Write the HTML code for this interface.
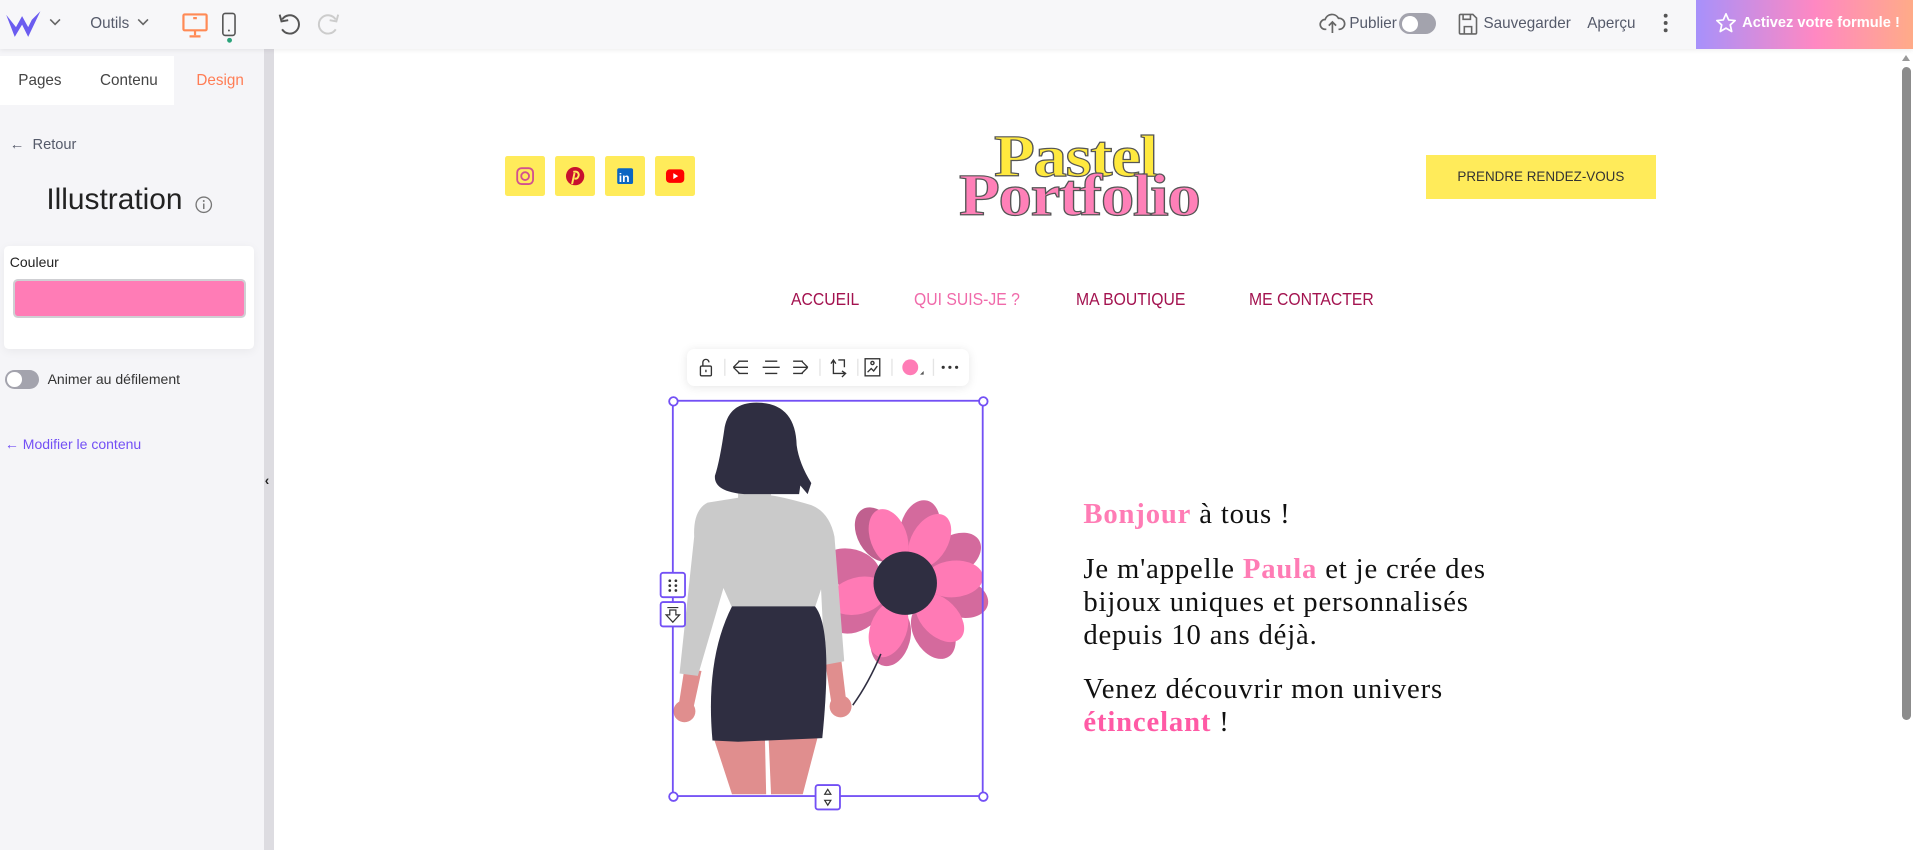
<!DOCTYPE html>
<html><head><meta charset="utf-8">
<style>
html,body{margin:0;padding:0;}
body{width:1568px;height:697px;zoom:1.22;overflow:hidden;position:relative;background:#fff;font-family:"Liberation Sans",sans-serif;}
.abs{position:absolute;}
.top{left:0;top:0;width:1568px;height:40px;background:#f7f7f9;box-shadow:0 1px 4px rgba(0,0,0,.08);z-index:5;}
.t{color:#555a6a;font-size:12.5px;}
.side{left:0;top:40px;width:216px;height:657px;background:#f5f5f8;}
.strip{left:216px;top:40px;width:9px;height:657px;background:#dddce1;}
.nav{font-size:14.5px;color:#a3124f;top:237px;transform:scaleX(.89);transform-origin:left;}
.soc{top:128px;width:33px;height:33px;background:#ffeb5a;border-radius:2px;}
.serif{font-family:"Liberation Serif",serif;font-size:23.5px;color:#111;line-height:27px;letter-spacing:.7px;}
.pk{color:#ff7cb5;font-weight:bold;}
</style></head><body>

<!-- top bar -->
<div class="abs top">
  <svg class="abs" style="left:4px;top:8px" width="30" height="24" viewBox="0 0 30 24"><path d="M1 4 L8 22 L14 12 L19 22 L29 1 L22 8 L19 14 L14 5 L9 14 Z" fill="#6b5cf0"/></svg>
  <svg class="abs" style="left:40px;top:14px" width="10" height="8"><path d="M1 2 L5 6 L9 2" stroke="#666" fill="none" stroke-width="1.3"/></svg>
  <div class="abs t" style="left:74px;top:12px">Outils</div>
  <svg class="abs" style="left:112px;top:14px" width="10" height="8"><path d="M1 2 L5 6 L9 2" stroke="#666" fill="none" stroke-width="1.3"/></svg>
  <svg class="abs" style="left:148px;top:10px" width="24" height="22"><rect x="2" y="2" width="19" height="13" rx="1" fill="none" stroke="#ff8a55" stroke-width="1.8"/><path d="M11.5 15v4M7 20h9M10 5h3" stroke="#ff8a55" stroke-width="1.8"/></svg>
  <svg class="abs" style="left:181px;top:9px" width="14" height="26"><rect x="1.5" y="2" width="10" height="18" rx="2" fill="none" stroke="#555" stroke-width="1.3"/><circle cx="6.5" cy="16" r=".8" fill="#555"/><circle cx="7" cy="24" r="2" fill="#2aa37a"/></svg>
  <svg class="abs" style="left:226px;top:9px" width="22" height="22"><path d="M5 7 A7.5 7.5 0 1 1 5 15" fill="none" stroke="#555" stroke-width="1.6"/><path d="M3 3 L4.5 8.5 L10 7.5" fill="none" stroke="#555" stroke-width="1.6"/></svg>
  <svg class="abs" style="left:258px;top:9px" width="22" height="22"><path d="M17 7 A7.5 7.5 0 1 0 17 15" fill="none" stroke="#ccc" stroke-width="1.6"/><path d="M19 3 L17.5 8.5 L12 7.5" fill="none" stroke="#ccc" stroke-width="1.6"/></svg>

  <svg class="abs" style="left:1081px;top:9px" width="22" height="20"><path d="M6 15 H5 A4 4 0 0 1 5 7 A6 6 0 0 1 16 6 A4.5 4.5 0 0 1 17 15 H16" fill="none" stroke="#666" stroke-width="1.4"/><path d="M11 18 V9 M8 12 L11 9 L14 12" fill="none" stroke="#666" stroke-width="1.4"/></svg>
  <div class="abs t" style="left:1106px;top:12px">Publier</div>
  <div class="abs" style="left:1147px;top:11px;width:30px;height:17px;border-radius:9px;background:#a3a3ad"><div style="position:absolute;left:2px;top:2px;width:13px;height:13px;border-radius:50%;background:#fff"></div></div>
  <svg class="abs" style="left:1194px;top:10px" width="18" height="20"><path d="M3 2 H13 L16 5 V17 A1 1 0 0 1 15 18 H3 A1 1 0 0 1 2 17 V3 A1 1 0 0 1 3 2 Z" fill="none" stroke="#666" stroke-width="1.3"/><path d="M5 2 V6 H11 V2 M6 18 V12 H12 V18" fill="none" stroke="#666" stroke-width="1.3"/></svg>
  <div class="abs t" style="left:1216px;top:12px">Sauvegarder</div>
  <div class="abs t" style="left:1301px;top:12px">Aperçu</div>
  <svg class="abs" style="left:1362px;top:10px" width="6" height="20"><circle cx="3" cy="3" r="1.6" fill="#555"/><circle cx="3" cy="9" r="1.6" fill="#555"/><circle cx="3" cy="15" r="1.6" fill="#555"/></svg>
  <div class="abs" style="left:1390px;top:0;width:178px;height:40px;background:linear-gradient(90deg,#a791fb,#ff88c2 55%,#ffab88)">
    <svg class="abs" style="left:16px;top:10px" width="18" height="18"><path d="M9 1.5 L11.2 6.5 L16.5 7 L12.5 10.6 L13.7 16 L9 13.2 L4.3 16 L5.5 10.6 L1.5 7 L6.8 6.5 Z" fill="none" stroke="#fff" stroke-width="1.4" stroke-linejoin="round"/></svg>
    <div class="abs" style="left:38px;top:12px;color:#fff;font-size:12px;font-weight:bold">Activez votre formule !</div>
  </div>
</div>

<!-- sidebar -->
<div class="abs side">
  <div class="abs" style="left:0;top:6px;width:143px;height:40px;background:#fff"></div>
  <div class="abs t" style="left:15px;top:19px;color:#444">Pages</div>
  <div class="abs t" style="left:82px;top:19px;color:#444">Contenu</div>
  <div class="abs t" style="left:161px;top:19px;color:#ff7d55">Design</div>
  <div class="abs t" style="left:8px;top:72px;font-size:12px">←&nbsp; Retour</div>
  <div class="abs" style="left:38px;top:110px;font-size:24.5px;color:#222">Illustration</div>
  <svg class="abs" style="left:159px;top:120px" width="16" height="16"><circle cx="8" cy="8" r="6.3" fill="none" stroke="#777" stroke-width="1.1"/><path d="M8 7v4.5" stroke="#777" stroke-width="1.2"/><circle cx="8" cy="4.9" r=".8" fill="#777"/></svg>
  <div class="abs" style="left:3px;top:162px;width:205px;height:84px;background:#fff;border-radius:4px;box-shadow:0 2px 8px rgba(0,0,0,.05)">
    <div class="abs" style="left:5px;top:6px;font-size:11.5px;color:#222">Couleur</div>
    <div class="abs" style="left:8px;top:27px;width:187px;height:28px;background:#ff7cb6;border:2px solid #cfcfd3;border-radius:4px"></div>
  </div>
  <div class="abs" style="left:4px;top:263px;width:28px;height:16px;border-radius:8px;background:#a3a3ad"><div style="position:absolute;left:2px;top:2px;width:12px;height:12px;border-radius:50%;background:#fff"></div></div>
  <div class="abs" style="left:39px;top:264px;font-size:11.5px;color:#333">Animer au défilement</div>
  <div class="abs" style="left:4px;top:317px;font-size:11.5px;color:#7350f5">← Modifier le contenu</div>
</div>
<div class="abs strip"><div class="abs" style="left:1px;top:348px;font-size:11px;font-weight:bold;color:#222">‹</div></div>

<!-- scrollbar -->
<div class="abs" style="left:1556px;top:40px;width:12px;height:657px;background:#fff"></div>
<div class="abs" style="left:1559px;top:55px;width:7px;height:535px;background:#8c8c8c;border-radius:4px"></div>
<div class="abs" style="left:1559px;top:45px;width:0;height:0;border-left:3.5px solid transparent;border-right:3.5px solid transparent;border-bottom:5px solid #999"></div>

<!-- header -->
<div class="abs soc" style="left:414px"><svg width="33" height="33"><rect x="10" y="10" width="13" height="13" rx="3.5" fill="none" stroke="#d2508f" stroke-width="1.5"/><circle cx="16.5" cy="16.5" r="3.2" fill="none" stroke="#d2508f" stroke-width="1.5"/></svg></div>
<div class="abs soc" style="left:455px"><svg width="33" height="33"><circle cx="16.5" cy="16.5" r="7.5" fill="#c8102e"/><path d="M15 13 Q19 12 19.5 15.5 Q19 19 16 18.5 M16 14 L14 23" stroke="#ffeb5a" stroke-width="1.6" fill="none"/></svg></div>
<div class="abs soc" style="left:496px"><svg width="33" height="33"><rect x="10" y="10" width="13" height="13" rx="1.5" fill="#0a66c2"/><text x="11.3" y="21.5" font-size="10" font-weight="bold" fill="#fff" font-family="Liberation Sans">in</text></svg></div>
<div class="abs soc" style="left:537px"><svg width="33" height="33"><rect x="9" y="11" width="15" height="11" rx="3" fill="#f00"/><path d="M15 14 L19 16.5 L15 19Z" fill="#fff"/></svg></div>

<div class="abs" style="left:815px;top:100px;font-family:'Liberation Serif',serif;font-weight:bold;font-size:49px;color:#ffe93e;-webkit-text-stroke:1px #555;letter-spacing:-1px;transform:scaleX(1.12);transform-origin:left">Pastel</div>
<div class="abs" style="left:786px;top:132px;font-family:'Liberation Serif',serif;font-weight:bold;font-size:49px;color:#ff80b8;-webkit-text-stroke:1px #555;letter-spacing:-1px;transform:scaleX(1.12);transform-origin:left">Portfolio</div>

<div class="abs" style="left:1169px;top:127px;width:188px;height:36px;background:#ffeb5a;color:#333;font-size:11px;text-align:center;line-height:36px">PRENDRE RENDEZ-VOUS</div>

<div class="abs nav" style="left:648px">ACCUEIL</div>
<div class="abs nav" style="left:749px;color:#f06aaa">QUI SUIS-JE ?</div>
<div class="abs nav" style="left:882px">MA BOUTIQUE</div>
<div class="abs nav" style="left:1024px">ME CONTACTER</div>

<!-- toolbar -->
<div class="abs" style="left:563px;top:286px;width:231px;height:30px;background:#fff;border-radius:6px;box-shadow:0 1px 8px rgba(0,0,0,.1)">
<svg width="231" height="30" fill="none" stroke="#333" stroke-width="1.1">
<rect x="11" y="14" width="9" height="8" rx="1"/><path d="M13 14 V11 A2.5 2.5 0 0 1 18 11"/><path d="M15.5 17 V19"/>
<path d="M31 8 V22" stroke="#e4e4e4"/>
<path d="M38 15 L43 10 M38 15 L43 20 M38 15 H50 M42 10 H50 M42 20 H50"/>
<path d="M64 10 H74 M62 15 H76 M64 20 H74"/>
<path d="M99 15 L94 10 M99 15 L94 20 M87 15 H99 M87 10 H95 M87 20 H95"/>
<path d="M109 8 V22" stroke="#e4e4e4"/>
<path d="M118 12 L120 9 L122 12 M120 9 V20 H130 M127 18 L130 20 L127 23 M124 9 H129 V15"/>
<path d="M140 8 V22" stroke="#e4e4e4"/>
<rect x="146" y="8" width="12" height="14"/><circle cx="152" cy="11.5" r="1.3"/><path d="M148 19 L151 16 L153 18 L156 14"/>
<path d="M168 8 V22" stroke="#e4e4e4"/>
<circle cx="183" cy="15" r="6.5" fill="#ff7cb6" stroke="none"/><path d="M191 21 L194 18 V21Z" fill="#555" stroke="none"/>
<path d="M202 8 V22" stroke="#e4e4e4"/>
<circle cx="210" cy="15" r="1.3" fill="#333" stroke="none"/><circle cx="215.5" cy="15" r="1.3" fill="#333" stroke="none"/><circle cx="221" cy="15" r="1.3" fill="#333" stroke="none"/>
</svg></div>

<!-- illustration + selection -->
<svg class="abs" style="left:0;top:0" width="1568" height="697">
 <g transform="translate(742,478)">
  <g fill="#d46a9d">
   <ellipse cx="0" cy="-46" rx="16" ry="24" transform="rotate(15)"/>
   <ellipse cx="0" cy="-46" rx="16" ry="24" transform="rotate(60)"/>
   <ellipse cx="0" cy="-46" rx="16" ry="24" transform="rotate(105)"/>
   <ellipse cx="0" cy="-46" rx="16" ry="24" transform="rotate(150)"/>
   <ellipse cx="0" cy="-46" rx="16" ry="24" transform="rotate(195)"/>
   <ellipse cx="0" cy="-46" rx="16" ry="24" transform="rotate(240)"/>
   <ellipse cx="0" cy="-46" rx="16" ry="24" transform="rotate(285)"/>
   <ellipse cx="0" cy="-46" rx="16" ry="24" transform="rotate(330)" fill="#c0608f"/>
  </g>
  <g fill="#ff7ab5">
   <ellipse cx="0" cy="-40" rx="15" ry="24" transform="rotate(-20)"/>
   <ellipse cx="0" cy="-40" rx="15" ry="24" transform="rotate(30)"/>
   <ellipse cx="0" cy="-40" rx="15" ry="24" transform="rotate(85)"/>
   <ellipse cx="0" cy="-40" rx="15" ry="24" transform="rotate(135)"/>
   <ellipse cx="0" cy="-40" rx="15" ry="24" transform="rotate(200)"/>
   <ellipse cx="0" cy="-40" rx="15" ry="24" transform="rotate(255)"/>
  </g>
  <circle r="26" fill="#2f2e41"/>
 </g>
 <path d="M722 536 Q712 560 699 578" stroke="#2f2e41" stroke-width="1.3" fill="none"/>
 <path d="M561 548 L556 580 L568 582 L575 550Z" fill="#e08e8e"/>
 <path d="M676 540 L682 580 L694 578 L689 536Z" fill="#e08e8e"/>
 <circle cx="561" cy="583" r="9" fill="#e08e8e"/>
 <circle cx="689" cy="579" r="9" fill="#e08e8e"/>
 <path d="M585 605 L600 651 L628 651 L627 605Z" fill="#e08e8e"/>
 <path d="M630 605 L632 651 L658 651 L670 605Z" fill="#e08e8e"/>
 <path d="M580 412 Q568 418 569 440 L557 552 L572 554 L593 482 L600 498 L668 498 L673 483 L676 545 L692 542 L684 440 Q680 420 665 414 Q645 408 632 406 L632 400 L605 400 L605 408Z" fill="#cacaca"/>
 <path d="M600 497 L668 497 Q683 515 674 605 L605 608 L584 607 Q578 540 600 497Z" fill="#2f2e41"/>
 <path d="M620 330 Q652 330 653 365 Q655 380 665 396 L662 405 L656 398 L655 405 L610 405 Q585 403 586 390 Q590 378 594 350 Q598 330 620 330Z" fill="#2f2e41"/>
 <rect x="551.5" y="328.5" width="254" height="324" fill="none" stroke="#7350f5" stroke-width="1.5"/>
 <g fill="#fff" stroke="#7350f5" stroke-width="1.5">
  <circle cx="552" cy="329" r="3.5"/><circle cx="806" cy="329" r="3.5"/><circle cx="552" cy="653" r="3.5"/><circle cx="806" cy="653" r="3.5"/>
  <rect x="541.5" y="469.5" width="20" height="20" rx="2"/>
  <rect x="541.5" y="493.5" width="20" height="20" rx="2"/>
  <rect x="668.5" y="643.5" width="20" height="20" rx="2"/>
 </g>
 <g fill="#333"><circle cx="549" cy="476" r="1.1"/><circle cx="554" cy="476" r="1.1"/><circle cx="549" cy="480" r="1.1"/><circle cx="554" cy="480" r="1.1"/><circle cx="549" cy="484" r="1.1"/><circle cx="554" cy="484" r="1.1"/></g>
 <path d="M547 498 H556 M549 500 V504 H546 L551.5 510 L557 504 H554 V500Z" fill="none" stroke="#333" stroke-width="1"/>
 <path d="M678.5 647 L676 651 H681Z M678.5 660 L676 656 H681Z" fill="none" stroke="#333" stroke-width="1"/>
</svg>

<!-- text -->
<div class="abs serif" style="left:888px;top:408px"><span class="pk">Bonjour</span> à tous !</div>
<div class="abs serif" style="left:888px;top:453px;width:400px">Je m'appelle <span class="pk">Paula</span> et je crée des<br>bijoux uniques et personnalisés<br>depuis 10 ans déjà.</div>
<div class="abs serif" style="left:888px;top:552px;width:400px">Venez découvrir mon univers<br><span class="pk" style="color:#ff5aa5">étincelant</span> !</div>

</body></html>
